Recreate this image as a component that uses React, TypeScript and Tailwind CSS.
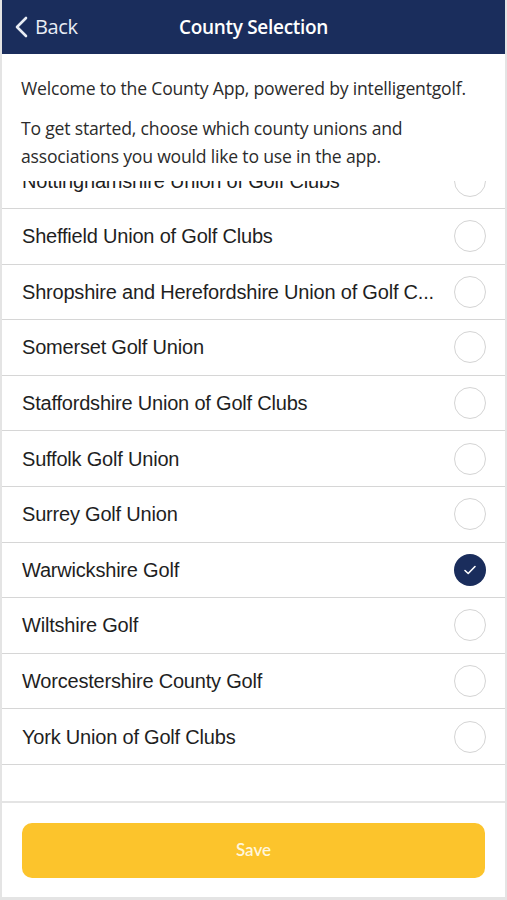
import React from "react";

const counties = [
  { name: "Nottinghamshire Union of Golf Clubs", checked: false },
  { name: "Sheffield Union of Golf Clubs", checked: false },
  { name: "Shropshire and Herefordshire Union of Golf C...", checked: false },
  { name: "Somerset Golf Union", checked: false },
  { name: "Staffordshire Union of Golf Clubs", checked: false },
  { name: "Suffolk Golf Union", checked: false },
  { name: "Surrey Golf Union", checked: false },
  { name: "Warwickshire Golf", checked: true },
  { name: "Wiltshire Golf", checked: false },
  { name: "Worcestershire County Golf", checked: false },
  { name: "York Union of Golf Clubs", checked: false },
];

function Radio({ checked }: { checked: boolean }) {
  if (checked) {
    return (
      <div className="w-[32px] h-[32px] rounded-full bg-[#1a2d5c] flex items-center justify-center">
        <svg width="16" height="16" viewBox="0 0 16 16" fill="none">
          <path d="M3 8.5l3.2 3L13 4.5" stroke="white" strokeWidth="1.6" strokeLinecap="round" strokeLinejoin="round" />
        </svg>
      </div>
    );
  }
  return <div className="w-[32px] h-[32px] rounded-full border-[1.5px] border-[#d4d4d4]" />;
}

export default function App() {
  return (
    <div className="w-[507px] h-[900px] bg-[#e4e4e4] px-[2px] pb-[3px] flex flex-col">
      <div className="h-[54px] bg-[#1a2d5c] flex items-center relative shrink-0">
        <div className="flex items-center pl-[13px] gap-[7px] text-[#e8ecf4] font-['Open_Sans',sans-serif] text-[20px]">
          <svg width="13" height="22" viewBox="0 0 13 22" fill="none">
            <path d="M11 2L2 11l9 9" stroke="#e8ecf4" strokeWidth="2.6" strokeLinecap="round" strokeLinejoin="round" />
          </svg>
          <span className="tracking-[-0.4px]">Back</span>
        </div>
        <div className="absolute inset-0 flex items-center justify-center text-white font-semibold text-[19px] font-['Open_Sans',sans-serif] tracking-[-0.3px]">
          County Selection
        </div>
      </div>
      <div className="bg-white flex-1 flex flex-col min-h-0">
        <div className="h-[127px] px-[19px] pt-[20px] text-[#2b2b2b] font-['Open_Sans',sans-serif] text-[17.6px] leading-[28px] tracking-[-0.2px] shrink-0 overflow-hidden">
          <p>Welcome to the County App, powered by intelligentgolf.</p>
          <p className="mt-[12px] pr-[60px]">To get started, choose which county unions and associations you would like to use in the app.</p>
        </div>
        <div className="h-[622px] overflow-hidden border-b-[2px] border-[#e4e4e4] shrink-0">
          <div className="-mt-[27.6px]">
            {counties.map((c) => (
              <div key={c.name} className="h-[55.6px] flex items-center justify-between pl-[20px] pr-[19px] border-b-[1.5px] border-[#d6d6d6]">
                <span className="font-['Liberation_Sans',Arial,sans-serif] text-[20px] text-[#1f1f1f] tracking-[-0.2px]">{c.name}</span>
                <Radio checked={c.checked} />
              </div>
            ))}
          </div>
        </div>
        <div className="flex-1 flex items-center px-[20px]">
          <button className="w-full h-[55px] rounded-[10px] bg-[#fcc42c] text-[#fff6dc] font-['Lato',sans-serif] font-semibold text-[17px]">
            Save
          </button>
        </div>
      </div>
    </div>
  );
}
